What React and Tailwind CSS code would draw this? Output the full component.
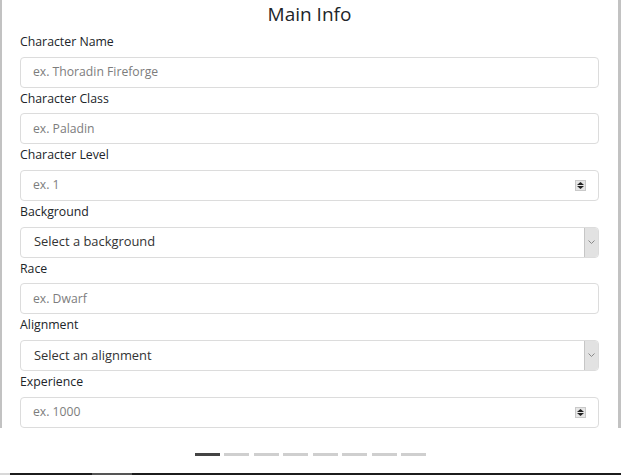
import React from "react";

/* ---------- small native-looking bits ---------- */
function Spinner() {
  return (
    <div className="w-[11px] h-[11px] bg-[#e6e6e6] border border-[#c9c9c9] flex flex-col items-center justify-center gap-[1px]">
      <svg width="7" height="3" viewBox="0 0 7 3">
        <path d="M0 3 L3.5 0 L7 3 Z" fill="#222" />
      </svg>
      <svg width="7" height="3" viewBox="0 0 7 3">
        <path d="M0 0 L3.5 3 L7 0 Z" fill="#222" />
      </svg>
    </div>
  );
}

function TextField({ label, placeholder, number }) {
  return (
    <div>
      <div className="h-[25.67px] leading-[21px] text-[12.3px] text-[#212529]">{label}</div>
      <div className="h-[31px] border border-[#dcdcdc] rounded-[4px] flex items-center pl-[12px] pr-[12px]">
        <span className="flex-1 text-[12.2px] text-[#7d7d7d]">{placeholder}</span>
        {number && <Spinner />}
      </div>
    </div>
  );
}

function SelectField({ label, value }) {
  return (
    <div>
      <div className="h-[25.67px] leading-[21px] text-[12.3px] text-[#212529]">{label}</div>
      <div className="h-[31px] border border-[#dcdcdc] rounded-[4px] flex items-stretch">
        <span className="flex-1 flex items-center pl-[13px] text-[12.9px] text-[#333]">{value}</span>
        <div className="w-[14px] bg-[#e2e2e2] border-l border-[#c6c6c6] rounded-r-[3px] flex items-center justify-center">
          <svg width="7" height="4" viewBox="0 0 7 4">
            <path d="M0.5 0.5 L3.5 3.5 L6.5 0.5" fill="none" stroke="#8a8a8a" strokeWidth="1" />
          </svg>
        </div>
      </div>
    </div>
  );
}

export default function App() {
  return (
    <div
      className="w-[621px] h-[475px] bg-white overflow-hidden flex flex-col"
      style={{ fontFamily: '"Open Sans", "Noto Sans", sans-serif' }}
    >
      {/* ======= CARD ======= */}
      <div className="h-[428px] border-l-2 border-r-[3px] border-[#c2c2c2] pl-[18px] pr-[19px] overflow-hidden">
        <h2 className="h-[31px] leading-[28px] text-[19px] text-center text-[#212529]">Main Info</h2>
        <TextField label="Character Name" placeholder="ex. Thoradin Fireforge" />
        <TextField label="Character Class" placeholder="ex. Paladin" />
        <TextField label="Character Level" placeholder="ex. 1" number />
        <SelectField label="Background" value="Select a background" />
        <TextField label="Race" placeholder="ex. Dwarf" />
        <SelectField label="Alignment" value="Select an alignment" />
        <TextField label="Experience" placeholder="ex. 1000" number />
      </div>

      {/* ======= PAGER ======= */}
      <div className="flex justify-center gap-[4.5px] mt-[25px]">
        <div className="w-[25px] h-[3px] bg-[#444]" />
        {[0, 1, 2, 3, 4, 5, 6].map((i) => (
          <div key={i} className="w-[25px] h-[3px] bg-[#cfcfcf]" />
        ))}
      </div>

      <div className="mt-auto h-[2px] flex">
        <div className="w-[10px] bg-[#d8d8d8]" />
        <div className="w-[82px] bg-[#1c1c1c]" />
        <div className="w-[40px] bg-[#555]" />
        <div className="flex-1 bg-[#1c1c1c]" />
      </div>
    </div>
  );
}
